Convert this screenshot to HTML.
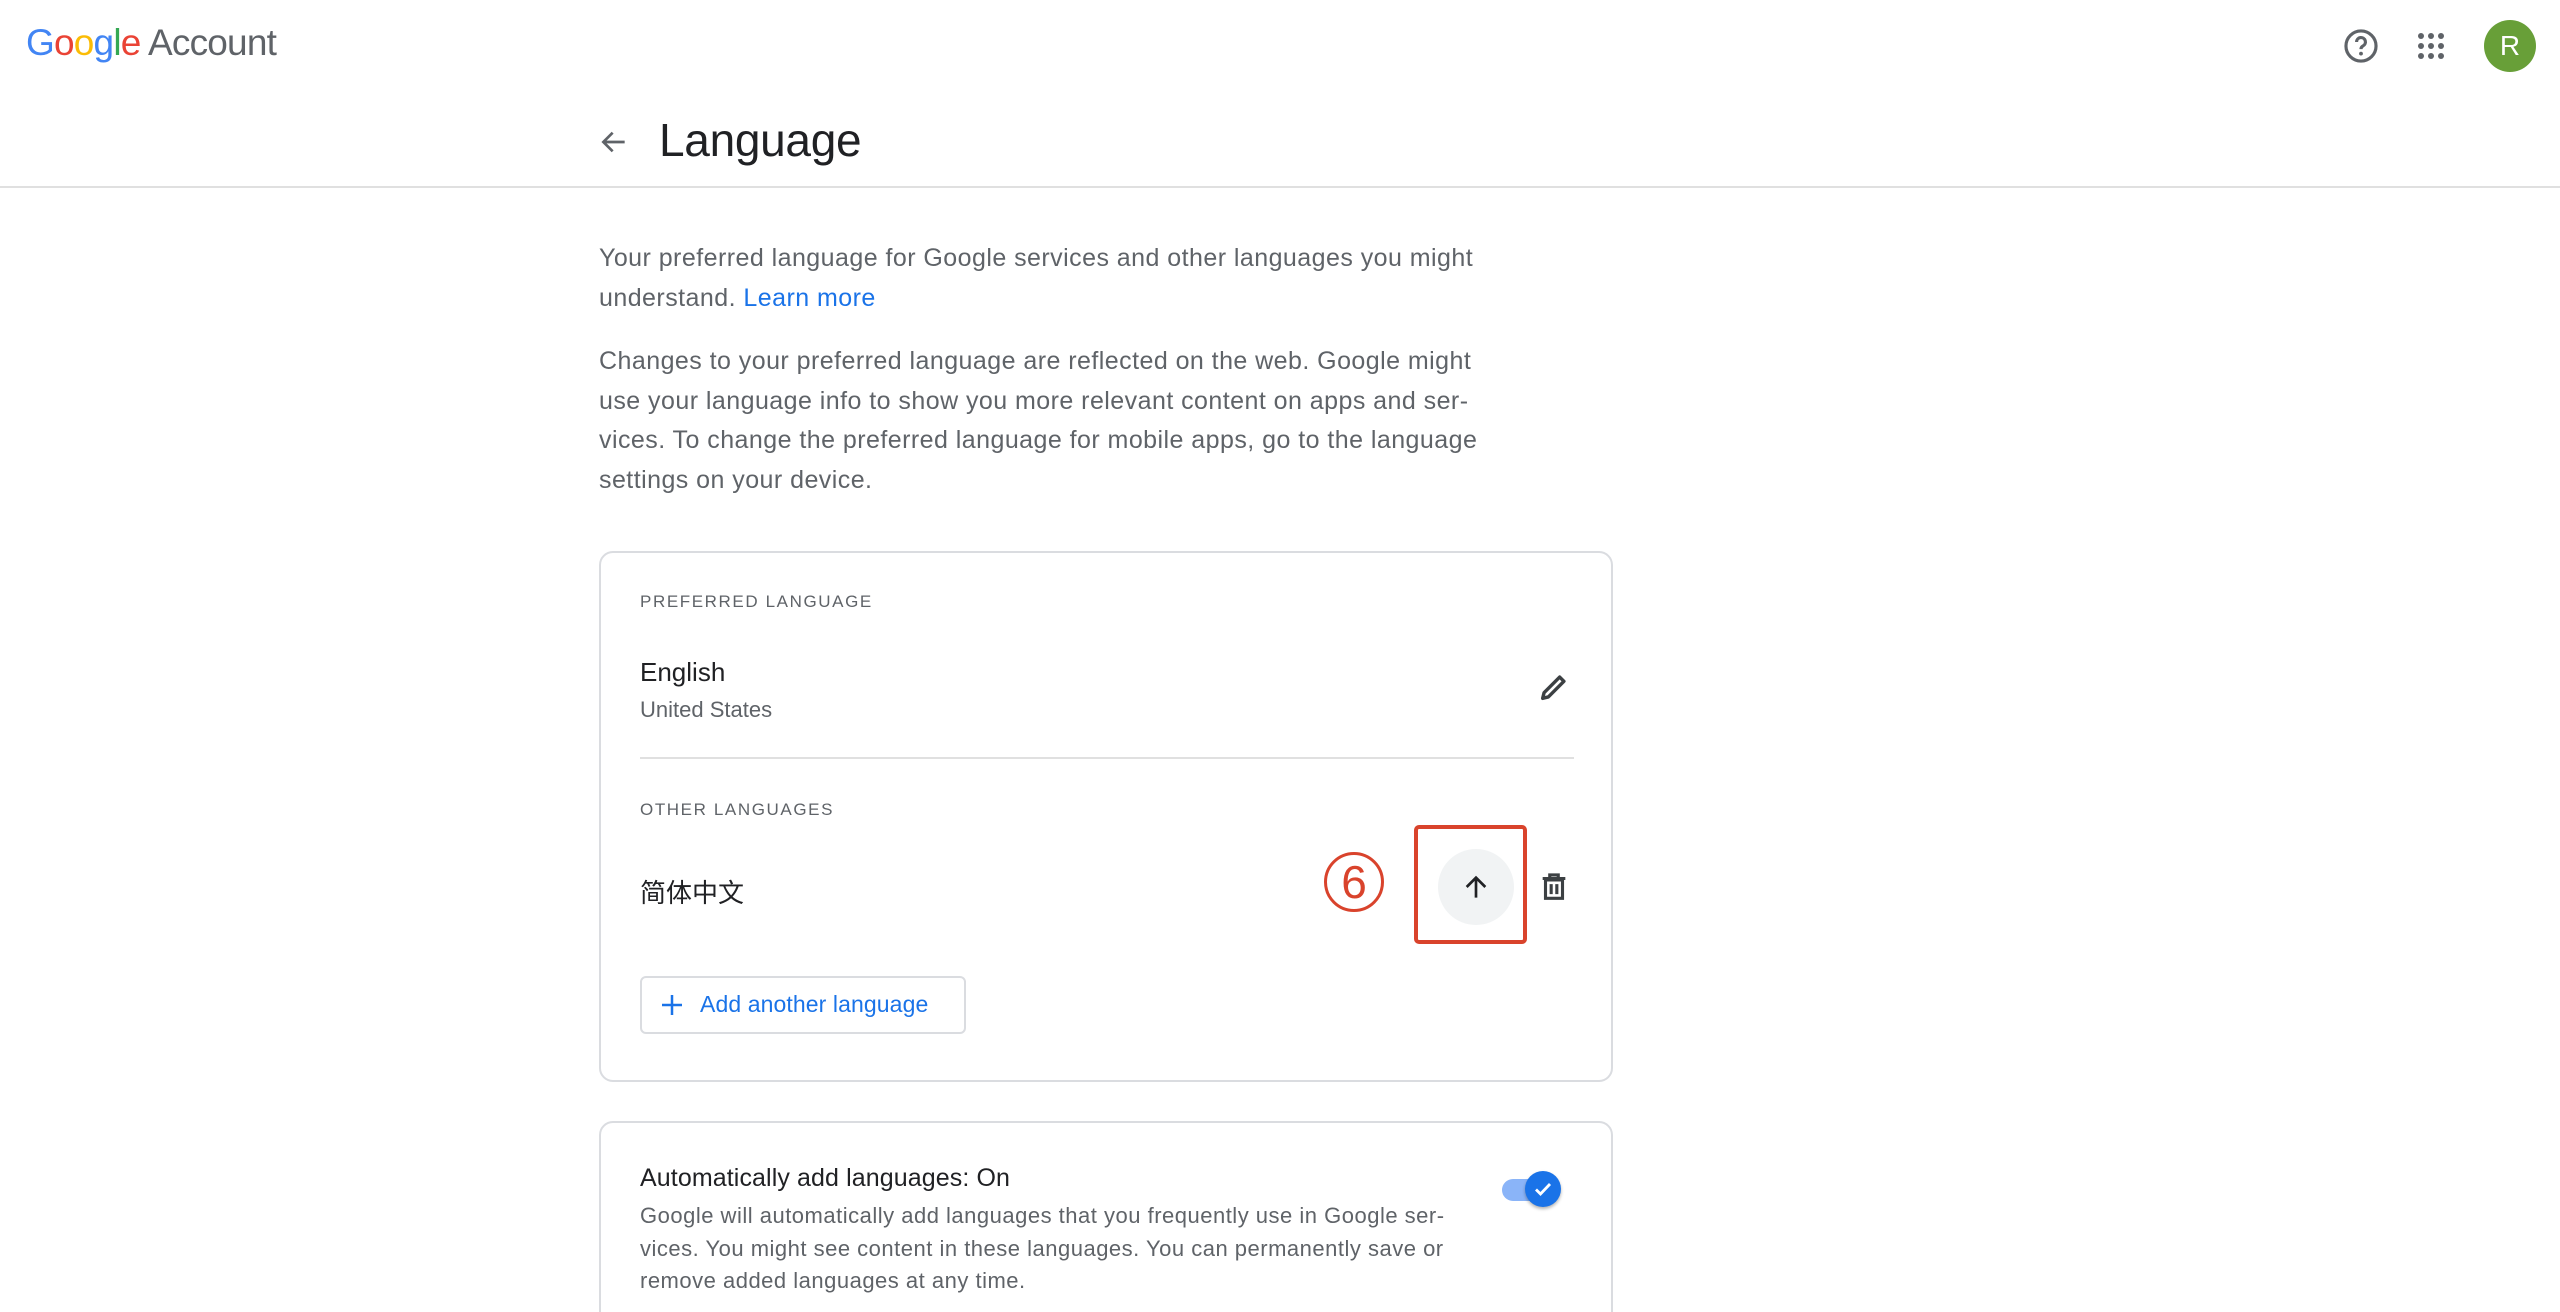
<!DOCTYPE html>
<html><head><meta charset="utf-8"><style>
*{margin:0;padding:0;box-sizing:border-box}
html,body{width:2560px;height:1312px;overflow:hidden}
body{background:#fff;font-family:"Liberation Sans","Noto Sans CJK SC",sans-serif;color:#202124;position:relative}
.a{position:absolute;white-space:nowrap}
.p{position:absolute;left:599px;white-space:nowrap;font-size:25px;line-height:39.5px;color:#5f6368;letter-spacing:0.45px}
.lab{position:absolute;left:640px;font-size:17px;letter-spacing:1.6px;color:#5f6368;font-weight:500}
.card{position:absolute;left:599px;width:1014px;border:2px solid #dadce0;border-radius:14px}
</style></head><body>
<div class="a" style="left:26px;top:22px;font-size:37px;letter-spacing:-0.8px"><span style="color:#4285f4">G</span><span style="color:#ea4335">o</span><span style="color:#fbbc05">o</span><span style="color:#4285f4">g</span><span style="color:#34a853">l</span><span style="color:#ea4335">e</span> <span style="color:#5f6368">Account</span></div>
<svg class="a" style="left:2342px;top:27px" width="38" height="38" viewBox="0 0 24 24"><circle cx="12" cy="12" r="9.5" fill="none" stroke="#5f6368" stroke-width="2"/><path d="M9.2 9.5a2.8 2.8 0 1 1 4 2.5c-.9.5-1.2 1-1.2 2" fill="none" stroke="#5f6368" stroke-width="2"/><circle cx="12" cy="16.8" r="1.2" fill="#5f6368"/></svg>
<svg class="a" style="left:2417px;top:32px" width="28" height="28" viewBox="0 0 28 28" fill="#5f6368"><circle cx="4" cy="4" r="3"/><circle cx="14" cy="4" r="3"/><circle cx="24" cy="4" r="3"/><circle cx="4" cy="14" r="3"/><circle cx="14" cy="14" r="3"/><circle cx="24" cy="14" r="3"/><circle cx="4" cy="24" r="3"/><circle cx="14" cy="24" r="3"/><circle cx="24" cy="24" r="3"/></svg>
<div class="a" style="left:2484px;top:20px;width:52px;height:52px;border-radius:50%;background:#689f38;color:#fff;font-size:28px;text-align:center;line-height:52px">R</div>
<div class="a" style="left:0;top:186px;width:2560px;height:2px;background:#e0e0e0"></div>
<svg class="a" style="left:598px;top:126px" width="32" height="32" viewBox="0 0 24 24"><path d="M20 12H5M11 5l-7 7 7 7" fill="none" stroke="#5f6368" stroke-width="2"/></svg>
<div class="a" style="left:659px;top:113px;font-size:46px;color:#202124;letter-spacing:-0.3px">Language</div>
<div class="p" style="top:239px">Your preferred language for Google services and other languages you might<br>understand. <span style="color:#1a73e8">Learn more</span></div>
<div class="p" style="top:342px">Changes to your preferred language are reflected on the web. Google might<br>use your language info to show you more relevant content on apps and ser-<br>vices. To change the preferred language for mobile apps, go to the language<br>settings on your device.</div>
<div class="card" style="top:551px;height:531px"></div>
<div class="lab" style="top:592px">PREFERRED LANGUAGE</div>
<div class="a" style="left:640px;top:657px;font-size:26px">English</div>
<div class="a" style="left:640px;top:697px;font-size:22px;color:#5f6368">United States</div>
<svg class="a" style="left:1537px;top:670px" width="34" height="34" viewBox="0 0 24 24"><path d="M4 20l1-4L16 5l3 3L8 19z" fill="none" stroke="#3c4043" stroke-width="2.4" stroke-linejoin="round"/></svg>
<div class="a" style="left:640px;top:757px;width:934px;height:2px;background:#e0e0e0"></div>
<div class="lab" style="top:800px">OTHER LANGUAGES</div>
<div class="a" style="left:640px;top:873px;font-size:26px">简体中文</div>
<div class="a" style="left:1324px;top:852px;width:60px;height:60px;border:3px solid #d9432c;border-radius:50%;color:#d9432c;font-size:46px;line-height:54px;text-align:center">6</div>
<div class="a" style="left:1414px;top:825px;width:113px;height:119px;border:4px solid #d9432c;border-radius:5px"></div>
<div class="a" style="left:1438px;top:849px;width:76px;height:76px;border-radius:50%;background:#f1f3f4"></div>
<svg class="a" style="left:1460px;top:871px" width="32" height="32" viewBox="0 0 24 24"><path d="M12 20V5M5 12l7-7 7 7" fill="none" stroke="#202124" stroke-width="2"/></svg>
<svg class="a" style="left:1537px;top:870px" width="34" height="34" viewBox="0 0 24 24"><path d="M6 7h12v13H6zM4 6h16M9 6V3.5h6V6M10 10v7M14 10v7" fill="none" stroke="#3c4043" stroke-width="2.2"/></svg>
<div class="a" style="left:640px;top:976px;width:326px;height:58px;border:2px solid #dadce0;border-radius:6px"></div>
<svg class="a" style="left:660px;top:993px" width="24" height="24" viewBox="0 0 24 24"><path d="M12 2v20M2 12h20" stroke="#1a73e8" stroke-width="2.5"/></svg>
<div class="a" style="left:700px;top:991px;font-size:23px;color:#1a73e8;font-weight:500;letter-spacing:0.1px">Add another language</div>
<div class="card" style="top:1121px;height:220px"></div>
<div class="a" style="left:640px;top:1164px;font-size:25px;letter-spacing:0.1px">Automatically add languages: On</div>
<div class="a" style="left:640px;top:1200px;font-size:22px;line-height:32.5px;color:#5f6368;letter-spacing:0.5px">Google will automatically add languages that you frequently use in Google ser-<br>vices. You might see content in these languages. You can permanently save or<br>remove added languages at any time.</div>
<div class="a" style="left:1502px;top:1179px;width:56px;height:22px;border-radius:11px;background:#8ab4f8"></div>
<div class="a" style="left:1525px;top:1171px;width:36px;height:36px;border-radius:50%;background:#1a73e8;box-shadow:0 2px 3px rgba(0,0,0,.3)"></div>
<svg class="a" style="left:1531px;top:1177px" width="24" height="24" viewBox="0 0 24 24"><path d="M5 12.5l4.5 4.5L19 7" fill="none" stroke="#fff" stroke-width="2.8"/></svg>
</body></html>
